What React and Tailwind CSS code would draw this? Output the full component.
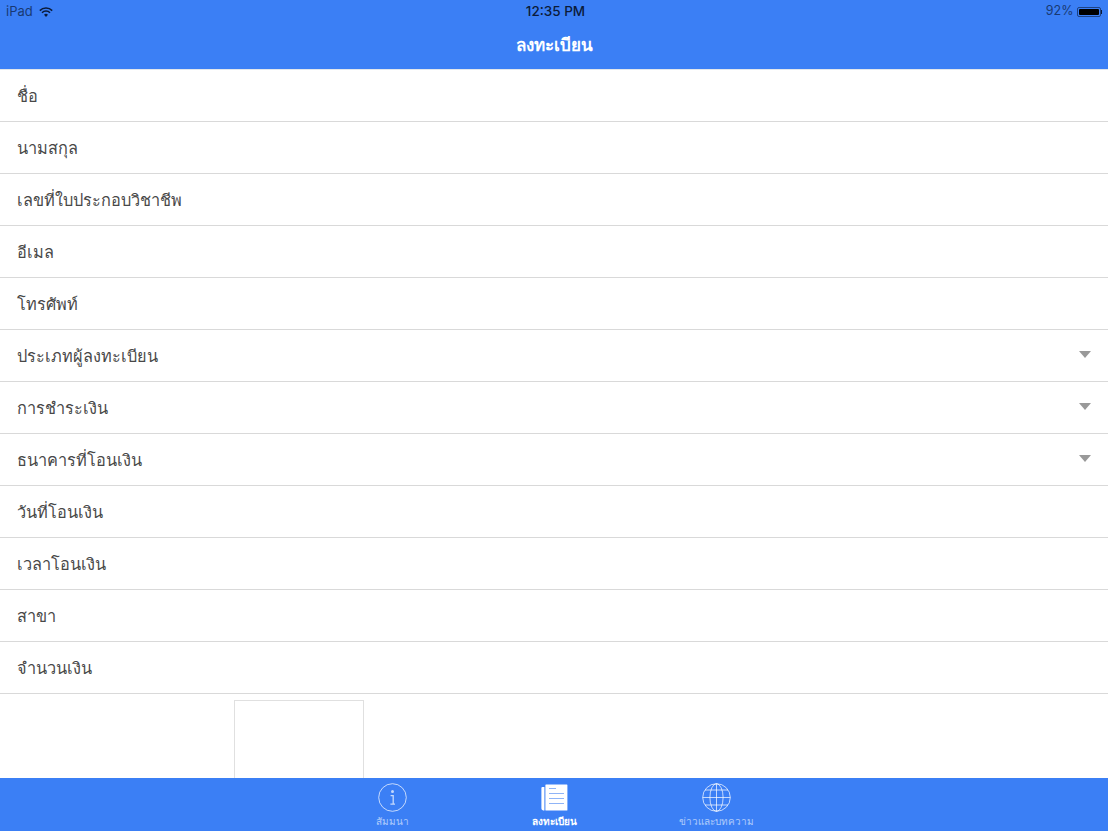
const fields = [
  { label: 'ชื่อ' },
  { label: 'นามสกุล' },
  { label: 'เลขที่ใบประกอบวิชาชีพ' },
  { label: 'อีเมล' },
  { label: 'โทรศัพท์' },
  { label: 'ประเภทผู้ลงทะเบียน', select: true },
  { label: 'การชำระเงิน', select: true },
  { label: 'ธนาคารที่โอนเงิน', select: true },
  { label: 'วันที่โอนเงิน' },
  { label: 'เวลาโอนเงิน' },
  { label: 'สาขา' },
  { label: 'จำนวนเงิน' },
];

function Wifi() {
  return (
    <svg width="14" height="10" viewBox="0 0 14 10" fill="none" stroke="#0b1b3a" strokeWidth="1.6">
      <path d="M0.8 3.6a8.8 8.8 0 0 1 12.4 0" />
      <path d="M3 5.7a5.6 5.6 0 0 1 8 0" />
      <path d="M7 10 5 7.8a2.9 2.9 0 0 1 4 0z" fill="#0b1b3a" stroke="none" />
    </svg>
  );
}

function Battery() {
  return (
    <div className="flex items-center">
      <div className="w-[24px] h-[10px] border border-[#0b1b3a]/60 rounded-[2px] p-px">
        <div className="w-[20px] h-full bg-black rounded-[1px]" />
      </div>
      <div className="w-[1.5px] h-[4px] bg-[#0b1b3a]" />
    </div>
  );
}

function InfoIcon() {
  return (
    <svg width="29" height="29" viewBox="0 0 29 29" fill="none" stroke="#fff" strokeOpacity="0.7">
      <circle cx="14.5" cy="14.5" r="13.8" strokeWidth="1" />
      <circle cx="14.5" cy="8.6" r="1.5" fill="#fff" fillOpacity="0.7" stroke="none" />
      <path d="M12.6 12.6h2.6v8.4M12.4 21.2h4.6" strokeWidth="1.3" />
    </svg>
  );
}

function Newspaper() {
  return (
    <svg width="27" height="27" viewBox="0 0 27 27">
      <path d="M3.4 3H1.4A1 1 0 0 0 .4 4v20.6a1.8 1.8 0 0 0 1.8 1.8h1.2z" fill="#fff" />
      <rect x="4.4" y="0.5" width="22" height="26" rx="0.6" fill="#fff" />
      <g stroke="#8fb4f7" strokeWidth="1">
        <path d="M8 4.5h7M8 9.5h15M8 14.5h15M8 19.5h15" />
      </g>
    </svg>
  );
}

function GlobeIcon() {
  return (
    <svg width="29" height="29" viewBox="0 0 29 29" fill="none" stroke="#fff" strokeOpacity="0.7" strokeWidth="1">
      <circle cx="14.5" cy="14.5" r="13.8" />
      <ellipse cx="14.5" cy="14.5" rx="6.6" ry="13.8" />
      <path d="M14.5 .7v27.6M.7 14.5h27.6M3 7h23M3 22h23" />
    </svg>
  );
}

function Tab({ label, active, children }) {
  return (
    <div className={`w-[100px] pt-[5px] flex flex-col items-center ${active ? 'text-white font-bold' : 'text-white/60'}`}>
      <div className="h-[29px] flex items-center justify-center">{children}</div>
      <span className="mt-[2px] text-[10px] leading-[15px] whitespace-nowrap">{label}</span>
    </div>
  );
}

export default function App() {
  return (
    <div className="h-[831px] flex flex-col bg-white overflow-hidden font-['Inter','Noto_Sans',sans-serif]">
      {/* header */}
      <div className="h-[70px] bg-[#3b7ff5] flex-shrink-0 border-b border-[#e2e6ec]">
        <div className="h-[23px] px-[6px] grid grid-cols-3 items-center text-[13px] text-[#0b1b3a]">
          <div className="flex items-center gap-[6px]">
            <span className="opacity-70">iPad</span>
            <Wifi />
          </div>
          <div className="text-center font-medium text-[13.5px] pl-[3px]">12:35 PM</div>
          <div className="flex items-center justify-end gap-[3px]">
            <span className="opacity-70 text-[12.5px]">92%</span>
            <Battery />
          </div>
        </div>
        <div className="h-[46px] flex items-center justify-center text-white font-bold text-[17px]">ลงทะเบียน</div>
      </div>

      {/* form */}
      <div className="flex-1 overflow-hidden">
        {fields.map(f => (
          <div key={f.label} className="h-[52px] pt-[2px] px-[17px] flex items-center justify-between border-b border-[#d9d9d9] text-[16.3px] text-[#484848]">
            <span>{f.label}</span>
            {f.select && <div className="w-0 h-0 mb-[4px] border-x-[6px] border-x-transparent border-t-[7px] border-t-[#999]" />}
          </div>
        ))}
        <div className="mt-[6px] ml-[234px] w-[130px] h-[130px] border border-[#e0e0e0]" />
      </div>

      {/* tab bar */}
      <div className="h-[53px] bg-[#3b7ff5] flex-shrink-0 flex justify-center gap-[62px]">
        <Tab label="สัมมนา">
          <InfoIcon />
        </Tab>
        <Tab label="ลงทะเบียน" active>
          <Newspaper />
        </Tab>
        <Tab label="ข่าวและบทความ">
          <GlobeIcon />
        </Tab>
      </div>
    </div>
  );
}
